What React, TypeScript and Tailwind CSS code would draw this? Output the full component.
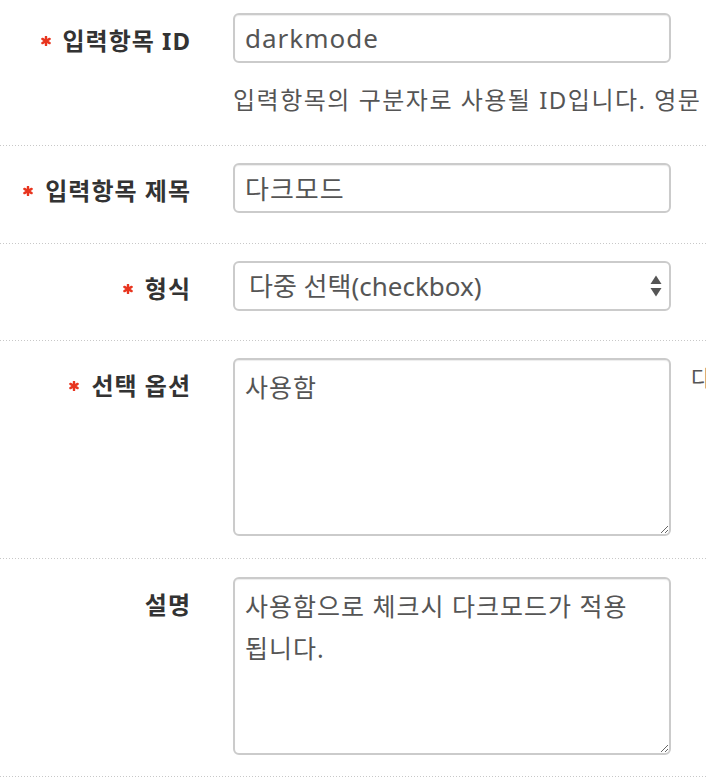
import React from "react";

function Star() {
  return (
    <svg width="10" height="10" viewBox="0 0 10 10" className="shrink-0">
      <g stroke="#e8351f" strokeWidth="2.4" strokeLinecap="round">
        <line x1="5" y1="0.8" x2="5" y2="9.2" />
        <line x1="1.4" y1="2.9" x2="8.6" y2="7.1" />
        <line x1="1.4" y1="7.1" x2="8.6" y2="2.9" />
      </g>
    </svg>
  );
}

function Label({ required, children }: { required?: boolean; children: React.ReactNode }) {
  return (
    <div className="w-[190px] shrink-0 pt-[6px]">
      <div className="h-[44px] flex items-center justify-end gap-[12px] text-[24px] tracking-[1px] font-bold text-[#333] leading-none whitespace-nowrap">
        {required && <Star />}
        <span className="mr-[-1px]">{children}</span>
      </div>
    </div>
  );
}

function Divider() {
  return <div className="h-px w-full bg-[linear-gradient(to_right,#c8c8c8_1px,transparent_1px)] bg-[length:3px_1px] bg-repeat-x" />;
}

export default function App() {
  return (
    <div className="w-[706px] h-[784px] overflow-hidden bg-white font-['Noto_Sans','Noto_Sans_CJK_KR',sans-serif]">
      {/* Row 1 */}
      <div className="flex pt-[13px] pb-[29px]">
        <Label required>입력항목 ID</Label>
        <div className="ml-[43px] w-[438px] shrink-0">
          <input
            defaultValue="darkmode"
            className="block w-full h-[50px] border-2 border-[#cbcbcb] rounded-[6px] bg-white px-[10px] text-[26px] tracking-[1px] text-[#555] shadow-[inset_0_1px_1px_rgba(0,0,0,0.075)] outline-none"
          />
          <div className="mt-[21px] h-[32px] leading-[32px] text-[24px] tracking-[1.5px] text-[#555] whitespace-nowrap">
            입력항목의 구분자로 사용될 ID입니다. 영문 소문자와 숫자만 사용할 수 있습니다.
          </div>
        </div>
      </div>
      <Divider />

      {/* Row 2 */}
      <div className="flex pt-[17px] pb-[30px]">
        <Label required>입력항목 제목</Label>
        <div className="ml-[43px] w-[438px] shrink-0">
          <input
            defaultValue="다크모드"
            className="block w-full h-[50px] border-2 border-[#cbcbcb] rounded-[6px] bg-white px-[10px] text-[26px] tracking-[1px] text-[#555] shadow-[inset_0_1px_1px_rgba(0,0,0,0.075)] outline-none"
          />
        </div>
      </div>
      <Divider />

      {/* Row 3 */}
      <div className="flex pt-[17px] pb-[29px]">
        <Label required>형식</Label>
        <div className="ml-[43px] w-[438px] shrink-0 relative">
          <select
            defaultValue="checkbox"
            className="block w-full h-[50px] appearance-none border-2 border-[#cbcbcb] rounded-[6px] bg-white pl-[14px] pr-[30px] text-[26px] text-[#555] outline-none"
          >
            <option value="checkbox">다중 선택(checkbox)</option>
          </select>
          <svg
            width="12"
            height="22"
            viewBox="0 0 12 22"
            className="absolute right-[9px] top-1/2 -translate-y-1/2 pointer-events-none"
          >
            <path d="M0.5 9 L6 0.5 L11.5 9 Z" fill="#555" />
            <path d="M0.5 13 L11.5 13 L6 21.5 Z" fill="#555" />
          </svg>
        </div>
      </div>
      <Divider />

      {/* Row 4 */}
      <div className="flex pt-[17px] pb-[22px]">
        <Label required>선택 옵션</Label>
        <div className="ml-[43px] w-[438px] shrink-0">
          <textarea
            defaultValue="사용함"
            className="block w-full h-[178px] border-2 border-[#cbcbcb] rounded-[6px] bg-white pl-[10px] pr-[26px] pt-[6px] text-[25px] tracking-[1px] leading-[42px] text-[#555] shadow-[inset_0_1px_1px_rgba(0,0,0,0.075)] outline-none"
          />
        </div>
        <div className="ml-[20px] pt-[4px] text-[22px] leading-[30px] text-[#555] whitespace-nowrap">
          다중 선택 옵션은 줄바꿈으로 구분합니다.
        </div>
      </div>
      <Divider />

      {/* Row 5 */}
      <div className="flex pt-[18px] pb-[21px]">
        <Label>설명</Label>
        <div className="ml-[43px] w-[438px] shrink-0">
          <textarea
            defaultValue="사용함으로 체크시 다크모드가 적용됩니다."
            className="block w-full h-[178px] border-2 border-[#cbcbcb] rounded-[6px] bg-white pl-[10px] pr-[26px] pt-[6px] text-[25px] tracking-[1px] leading-[42px] text-[#555] shadow-[inset_0_1px_1px_rgba(0,0,0,0.075)] outline-none"
          />
        </div>
      </div>
      <Divider />
    </div>
  );
}
